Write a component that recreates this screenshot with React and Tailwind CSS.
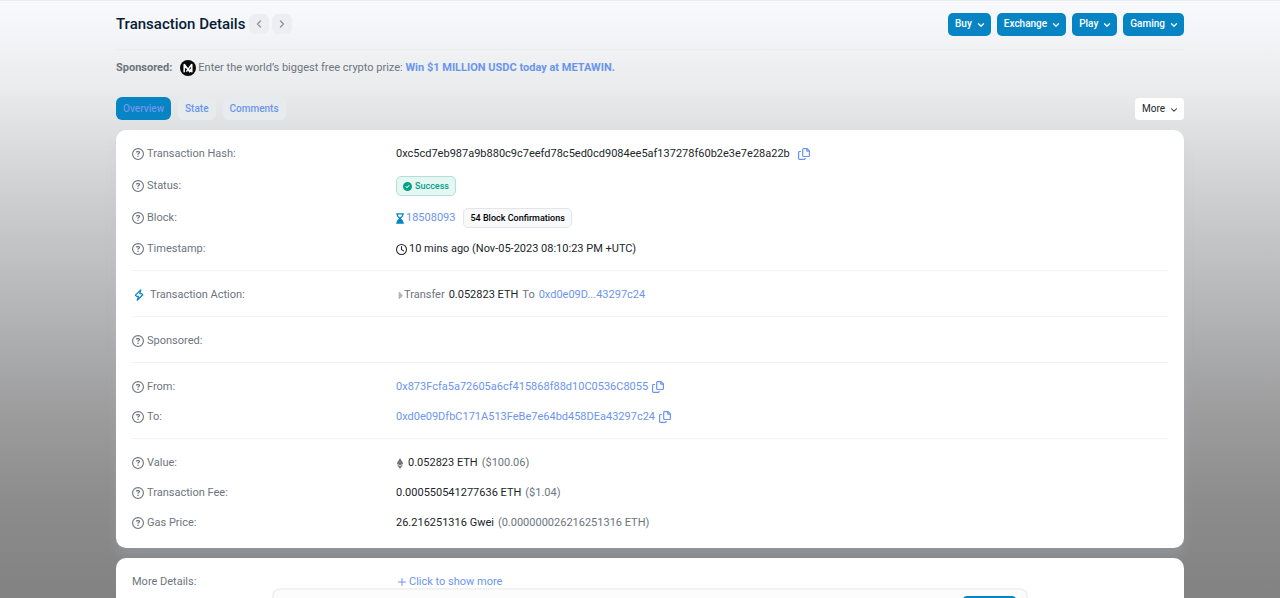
import { ChevronDown, ChevronLeft, ChevronRight, Plus } from "lucide-react";
import {
  FaCaretRight,
  FaCircleCheck,
  FaEthereum,
  FaHourglassEnd,
  FaRegCircleQuestion,
  FaRegClock,
} from "react-icons/fa6";

const link = "text-[#6b95ec] hover:underline";
const tab = "flex h-[23px] items-center rounded-md px-[7px]";

function MenuButton({ children }) {
  return (
    <button
      type="button"
      className="flex h-[23px] items-center gap-1 rounded-[5px] bg-[#0784c3] pr-[5px] pl-[7px] text-[10px] font-medium text-white"
    >
      {children}
      <ChevronDown className="mt-0.5 size-2.5" strokeWidth={3} />
    </button>
  );
}

function NavButton({ label, icon: Icon }) {
  return (
    <button
      type="button"
      aria-label={label}
      className="flex size-5 items-center justify-center rounded-md bg-[#eceef1] text-[#8a929a]"
    >
      <Icon className="size-3" strokeWidth={2.5} />
    </button>
  );
}

function Copy({ label }) {
  return (
    <button type="button" aria-label={label} className="text-[#6b95ec]">
      <svg viewBox="0 0 12 12" className="size-3" fill="none" stroke="currentColor" strokeWidth="1.2" strokeLinejoin="round">
        <path d="M5.600.6h3.600l2.200 2.200v4.800a.9.9 0 0 1-.9.9H5.600a.9.9 0 0 1-.9-.9V1.500a.9.9 0 0 1 .9-.9z" />
        <path d="M8.800.8v2.300h2.400M3 3.500H1.500a.9.9 0 0 0-.9.9v6.100a.9.9 0 0 0 .9.9h4.700a.9.9 0 0 0 .9-.9v-.4" />
      </svg>
    </button>
  );
}

function Row({ label, icon, children, className = "h-[30px]" }) {
  return (
    <div className={`grid grid-cols-4 items-center gap-x-5 ${className}`}>
      <dt className="flex items-center gap-[3px] text-[#6c757d]">
        {icon ?? <FaRegCircleQuestion className="size-3" />}
        {label}
      </dt>
      <dd className="col-span-3 flex items-center gap-1 text-[#212529]">{children}</dd>
    </div>
  );
}

function Bolt() {
  return (
    <svg viewBox="0 0 14 14" className="mr-px size-3.5" fill="none" stroke="#0784c3" strokeWidth="1.2" strokeLinejoin="round">
      <path d="M8.800 1.800 3.400 7.200l1.300 1.200H6.500L5.200 12.200l5.600-5.400L9.500 5.600H7.700z" />
    </svg>
  );
}

function Divider() {
  return <hr className="mt-1.5 mb-[9px] border-[#f1f2f4]" />;
}

export default function App() {
  return (
    <div className="flex min-h-screen flex-col border-t border-[#e9ecef] bg-[linear-gradient(#f8fafd_0%,#ebecee_14%,#e0e1e3_21%,#cccdcf_34%,#b6b7b9_50%,#9f9fa0_67%,#8d8d8d_83%,#828282_100%)] pl-5 text-[11px] leading-4 font-normal [font-family:Roboto,sans-serif]">
      <main className="mx-auto flex w-full max-w-[1068px] flex-1 flex-col">
        <header className="flex h-[49px] items-center justify-between border-b border-[#ebecee] pb-0.5">
          <div className="flex items-center">
            <h1 className="mr-1 text-[15px] font-medium text-[#081d35]">Transaction Details</h1>
            <div className="flex gap-[3px]">
              <NavButton label="Previous" icon={ChevronLeft} />
              <NavButton label="Next" icon={ChevronRight} />
            </div>
          </div>
          <nav className="flex gap-1.5">
            <MenuButton>Buy</MenuButton>
            <MenuButton>Exchange</MenuButton>
            <MenuButton>Play</MenuButton>
            <MenuButton>Gaming</MenuButton>
          </nav>
        </header>

        <p className="flex h-9 items-center text-[#6c757d]">
          <b className="mr-2 font-bold">Sponsored:</b>
          <svg viewBox="0 0 16 16" className="mr-0.5 size-4">
            <circle cx="8" cy="8" r="8" fill="#0b0b0b" />
            <path d="M4.200 12.200V4.200l6 8M11.800 12.200V4.200L6.400 11.600M4.200 5l2 3M11.800 12l-1.800-3" fill="none" stroke="#fff" strokeWidth="1.500" strokeLinejoin="bevel" />
          </svg>
          <span>
            Enter the world’s biggest free crypto prize:{" "}
            <a href="#metawin" className="font-bold text-[#6b95ec]">
              Win $1 MILLION USDC today at METAWIN.
            </a>
          </span>
        </p>

        <div className="mt-[11px] flex items-center justify-between">
          <nav className="flex gap-[7px] text-[10px] font-medium text-[#6b95ec]">
            <a href="#overview" className={`${tab} bg-[#0784c3]`}>
              Overview
            </a>
            <a href="#state" className={`${tab} bg-[#e8ebee]`}>
              State
            </a>
            <a href="#comments" className={`${tab} bg-[#e8ebee]`}>
              Comments
            </a>
          </nav>
          <button
            type="button"
            className="flex h-[22px] items-center gap-1 rounded bg-white pr-[5px] pl-[7px] text-[10px] text-[#212529]"
          >
            More
            <ChevronDown className="mt-0.5 size-2.5" strokeWidth={2.5} />
          </button>
        </div>

        <dl className="mt-2.5 rounded-[10px] bg-white px-4 pt-2 pb-2.5 shadow-[0_8px_12px_rgba(189,197,209,0.2)]">
          <Row label="Transaction Hash:" className="h-8">
            0xc5cd7eb987a9b880c9c7eefd78c5ed0cd9084ee5af137278f60b2e3e7e28a22b
            <span className="ml-1 flex">
              <Copy label="Copy transaction hash" />
            </span>
          </Row>
          <Row label="Status:" className="h-8">
            <span className="flex h-5 items-center gap-[3px] rounded-[5px] border border-[#b3e0d6] bg-[#e6f6f2] px-1.5 text-[9px] font-medium text-[#00a186]">
              <FaCircleCheck />
              Success
            </span>
          </Row>
          <Row label="Block:" className="h-8">
            <FaHourglassEnd className="-mr-0.5 h-[11px] w-2 text-[#0784c3]" />
            <a href="#block" className={link}>18508093</a>
            <span className="ml-1 flex h-5 items-center rounded-[5px] border border-[#e3e5e8] bg-[#f8f9fa] px-1.5 text-[9px] font-medium text-black">
              54 Block Confirmations
            </span>
          </Row>
          <Row label="Timestamp:">
            <FaRegClock className="-mr-0.5 size-[11px]" />
            10 mins ago (Nov-05-2023 08:10:23 PM +UTC)
          </Row>
          <Divider />
          <Row label="Transaction Action:" icon={<Bolt />}>
            <span className="flex items-center text-[#6c757d]">
              <FaCaretRight className="w-2 text-[#adb5bd]" />
              Transfer
            </span>
            0.052823 ETH
            <span className="text-[#6c757d]">To</span>
            <a href="#to" className={link}>0xd0e09D...43297c24</a>
          </Row>
          <Divider />
          <Row label="Sponsored:" />
          <Divider />
          <Row label="From:">
            <a href="#from" className={link}>0x873Fcfa5a72605a6cf415868f88d10C0536C8055</a>
            <Copy label="Copy sender address" />
          </Row>
          <Row label="To:">
            <a href="#to" className={link}>0xd0e09DfbC171A513FeBe7e64bd458DEa43297c24</a>
            <Copy label="Copy receiver address" />
          </Row>
          <Divider />
          <Row label="Value:">
            <FaEthereum className="h-[11px] w-2 text-[#6c757d]" />
            0.052823 ETH <span className="text-[#6c757d]">($100.06)</span>
          </Row>
          <Row label="Transaction Fee:">
            0.000550541277636 ETH <span className="text-[#6c757d]">($1.04)</span>
          </Row>
          <Row label="Gas Price:">
            26.216251316 Gwei <span className="text-[#6c757d]">(0.000000026216251316 ETH)</span>
          </Row>
        </dl>

        <section className="mt-2.5 grid flex-1 grid-cols-4 content-start gap-x-5 rounded-t-[10px] bg-white px-4 pt-4">
          <span className="text-[#6c757d]">More Details:</span>
          <button type="button" className={`col-span-3 flex items-center gap-px justify-self-start ${link}`}>
            <Plus className="size-3" />
            Click to show more
          </button>
        </section>
      </main>

      <div className="fixed inset-x-0 bottom-0 flex justify-center pl-5">
        <aside className="flex h-2.5 w-full max-w-[756px] justify-end overflow-hidden rounded-t-lg border-2 border-b-0 border-[#f1f2f3] bg-[#fcfcfc] px-2.5 pt-1.5">
          <button type="button" aria-label="Got it!" className="h-6 w-[53px] rounded bg-[#0784c3]" />
        </aside>
      </div>
    </div>
  );
}
